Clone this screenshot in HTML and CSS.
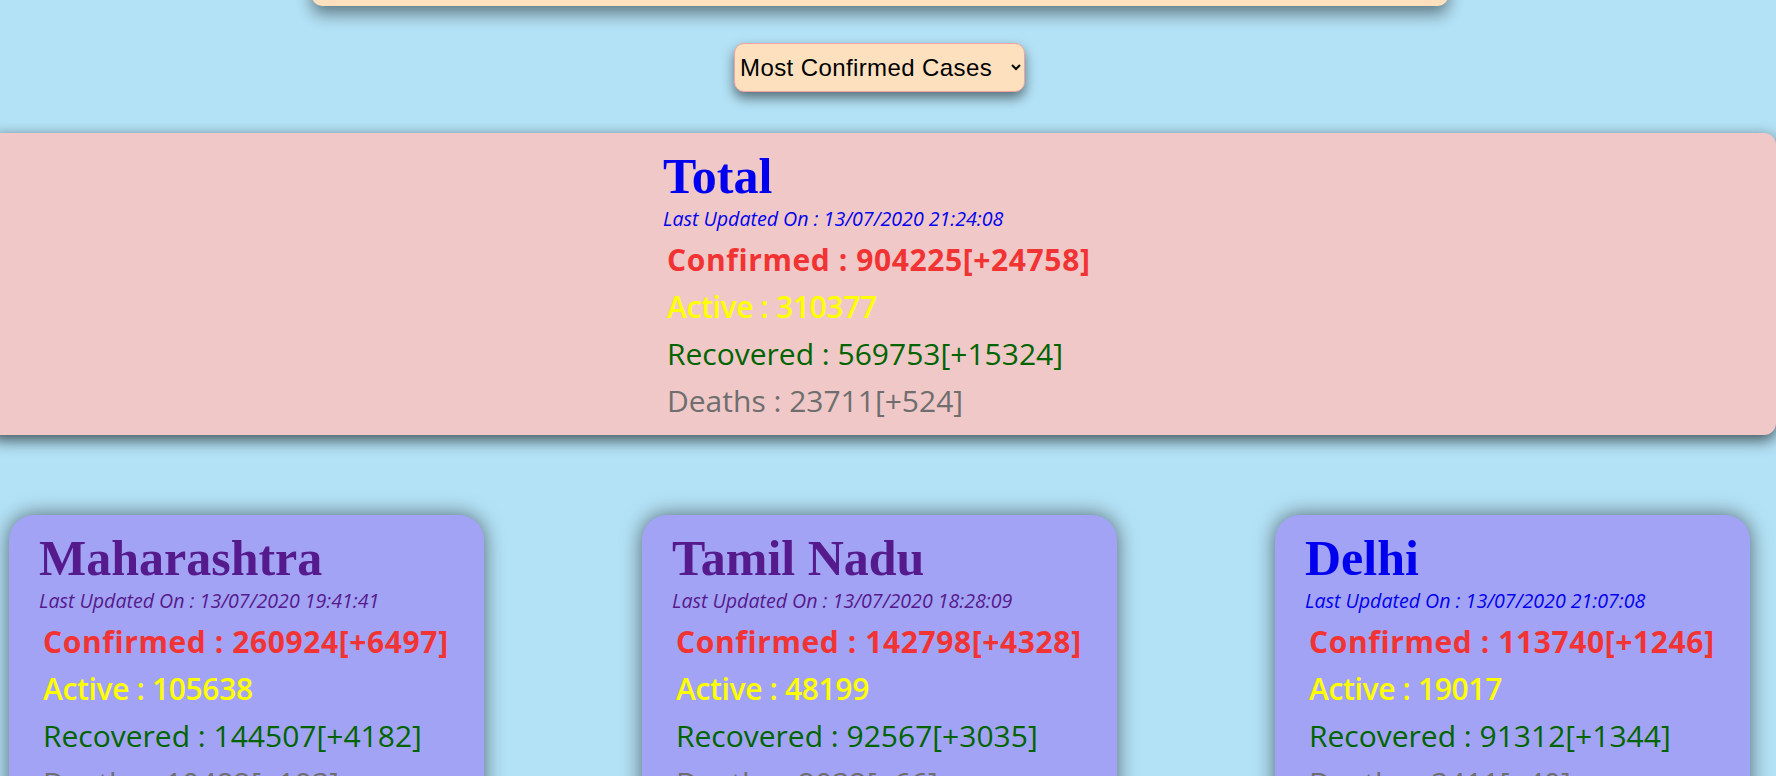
FILE: index.html
```html
<!DOCTYPE html>
<html lang="en">
<head>
<meta charset="utf-8">
<title>Covid Tracker</title>
<link rel="stylesheet" href="styles.css">
</head>
<body>
<div class="page">
  <div class="banner"></div>

  <div class="sort-row">
    <select class="sort">
      <option>Most Confirmed Cases</option>
      <option>Most Active Cases</option>
      <option>Most Recovered</option>
      <option>Most Deaths</option>
    </select>
  </div>

  <section class="total-card">
    <div class="total-body">
      <a class="head fresh" href="#total">
        <h1 class="title">Total</h1>
        <p class="updated">Last Updated On : 13/07/2020 21:24:08</p>
      </a>
      <p class="stat confirmed">Confirmed : 904225[+24758]</p>
      <p class="stat active">Active : 310377</p>
      <p class="stat recovered">Recovered : 569753[+15324]</p>
      <p class="stat deaths">Deaths : 23711[+524]</p>
    </div>
  </section>

  <div class="states">
    <section class="state-card">
      <a class="head visited" href="#mh">
        <h1 class="title">Maharashtra</h1>
        <p class="updated">Last Updated On : 13/07/2020 19:41:41</p>
      </a>
      <p class="stat confirmed">Confirmed : 260924[+6497]</p>
      <p class="stat active">Active : 105638</p>
      <p class="stat recovered">Recovered : 144507[+4182]</p>
      <p class="stat deaths">Deaths : 10482[+193]</p>
    </section>
    <section class="state-card">
      <a class="head visited" href="#tn">
        <h1 class="title">Tamil Nadu</h1>
        <p class="updated">Last Updated On : 13/07/2020 18:28:09</p>
      </a>
      <p class="stat confirmed">Confirmed : 142798[+4328]</p>
      <p class="stat active">Active : 48199</p>
      <p class="stat recovered">Recovered : 92567[+3035]</p>
      <p class="stat deaths">Deaths : 2032[+66]</p>
    </section>
    <section class="state-card">
      <a class="head fresh" href="#dl">
        <h1 class="title">Delhi</h1>
        <p class="updated">Last Updated On : 13/07/2020 21:07:08</p>
      </a>
      <p class="stat confirmed">Confirmed : 113740[+1246]</p>
      <p class="stat active">Active : 19017</p>
      <p class="stat recovered">Recovered : 91312[+1344]</p>
      <p class="stat deaths">Deaths : 3411[+40]</p>
    </section>
  </div>
</div>
</body>
</html>
```

FILE: styles.css
```css
html, body {
  margin: 0;
  padding: 0;
  overflow: hidden;
  background: #b3e1f5;
}

.page {
  width: 1759px;
  display: flex;
  flex-direction: column;
  font-family: "Open Sans", "Noto Sans", sans-serif;
}

.banner {
  align-self: center;
  width: 1136px;
  height: 40px;
  margin-top: -34px;
  background: #fde1bf;
  border-radius: 10px;
  box-shadow: 0 8px 16px rgba(0, 0, 0, 0.45);
}

.sort-row {
  display: flex;
  justify-content: center;
  margin-top: 37px;
}

.sort {
  width: 291px;
  height: 49px;
  padding: 0 4px 0 1px;
  font-family: "Liberation Sans", Arial, sans-serif;
  font-size: 24px;
  letter-spacing: 0.4px;
  color: #000;
  background-color: #fde1bf;
  border: 1px solid #f0a3a0;
  border-radius: 10px;
  box-shadow: 0 6px 12px rgba(0, 0, 0, 0.5);
}

.total-card {
  margin: 41px -17px 0 -12px;
  padding: 15px 0 11px 675px;
  background: #f0c8c8;
  border-radius: 12px;
  box-shadow: 0 5px 15px rgba(0, 0, 0, 0.65);
}

.head {
  display: block;
  text-decoration: none;
}

.head.fresh { color: #0000ee; }
.head.visited { color: #551a8b; }

.title {
  margin: 0;
  font-family: "Liberation Serif", "Times New Roman", serif;
  font-size: 50px;
  font-weight: 700;
  line-height: 56px;
}

.updated {
  margin: 2px 0 0;
  font-size: 19.6px;
  font-style: italic;
  line-height: 26px;
}

.stat {
  margin: 0;
  padding-left: 4px;
  font-size: 30px;
  line-height: 47px;
  white-space: nowrap;
}

.stat:first-of-type { margin-top: 4px; }

.confirmed { color: #f23333; font-weight: 700; letter-spacing: 0.6px; }
.active { color: #ffff00; font-weight: 600; letter-spacing: -0.35px; }
.recovered { color: #006400; font-weight: 500; }
.deaths { color: #6e6e6e; font-weight: 400; }

.states {
  display: flex;
  gap: 158px;
  padding: 0 9px;
  margin-top: 80px;
}

.state-card {
  width: 475px;
  box-sizing: border-box;
  padding: 15px 20px 20px 30px;
  background: #a3a3f5;
  border-radius: 25px;
  box-shadow: 0 0 20px rgba(0, 0, 0, 0.55);
}
```
